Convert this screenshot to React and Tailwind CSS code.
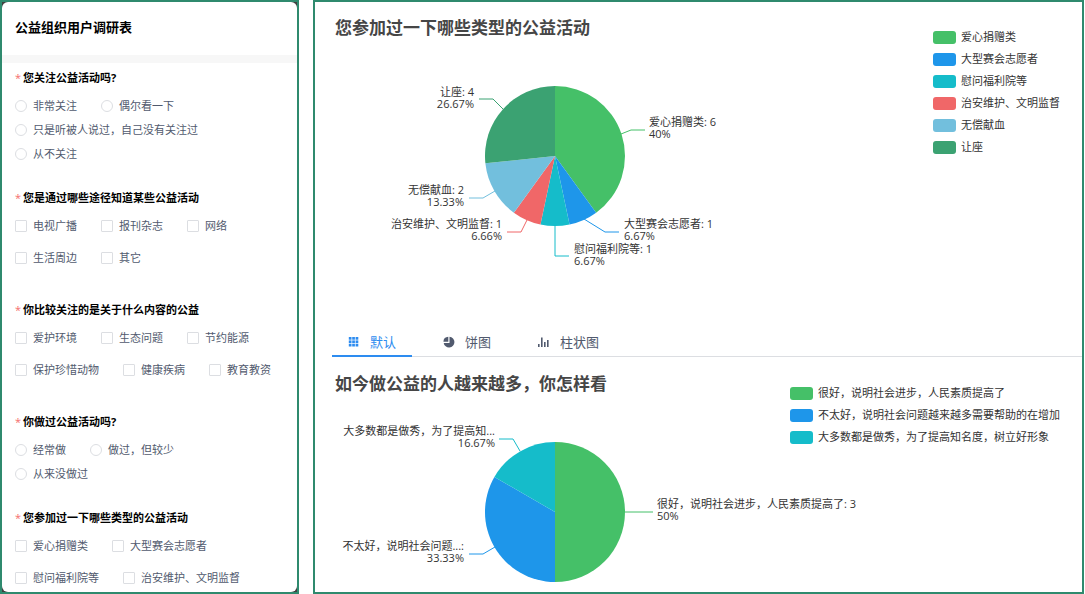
import React, { useState } from 'react'
import clsx from 'clsx'

const questions = [
    {
        id: "follow",
        title: "您关注公益活动吗?",
        type: "radio",
        options: ["非常关注", "偶尔看一下", "只是听被人说过，自己没有关注过", "从不关注"],
    },
    {
        id: "channel",
        title: "您是通过哪些途径知道某些公益活动",
        type: "checkbox",
        options: ["电视广播", "报刊杂志", "网络", "生活周边", "其它"],
    },
    {
        id: "content",
        title: "你比较关注的是关于什么内容的公益",
        type: "checkbox",
        options: ["爱护环境", "生态问题", "节约能源", "保护珍惜动物", "健康疾病", "教育教资"],
    },
    {
        id: "done",
        title: "你做过公益活动吗?",
        type: "radio",
        options: ["经常做", "做过，但较少", "从来没做过"],
    },
    {
        id: "kind",
        title: "您参加过一下哪些类型的公益活动",
        type: "checkbox",
        options: ["爱心捐赠类", "大型赛会志愿者", "慰问福利院等", "治安维护、文明监督"],
    },
]

// line and label positions are relative to the centre of the pie
const kindChart = {
    title: "您参加过一下哪些类型的公益活动",
    height: 270,
    slices: [
        { name: "爱心捐赠类", value: 6, color: "#45c068", text: "爱心捐赠类: 6", percent: "40%", line: "66,-22 76,-26 90,-26", x: 94, y: -34 },
        { name: "大型赛会志愿者", value: 1, color: "#1e96ea", text: "大型赛会志愿者: 1", percent: "6.67%", line: "29,63 50,76 64,76", x: 69, y: 68 },
        { name: "慰问福利院等", value: 1, color: "#15bcca", text: "慰问福利院等: 1", percent: "6.67%", line: "0,70 0,100 14,100", x: 19, y: 93 },
        { name: "治安维护、文明监督", value: 1, color: "#f06768", text: "治安维护、文明监督: 1", percent: "6.66%", line: "-28,64 -34,76 -48,76", x: -53, y: 68, left: true },
        { name: "无偿献血", value: 2, color: "#72bfdd", text: "无偿献血: 2", percent: "13.33%", line: "-60,35 -72,42 -86,42", x: -91, y: 34, left: true },
        { name: "让座", value: 4, color: "#3ba272", text: "让座: 4", percent: "26.67%", line: "-52,-47 -62,-57 -76,-57", x: -81, y: -64, left: true },
    ],
}

const opinionChart = {
    title: "如今做公益的人越来越多，你怎样看",
    height: 234,
    slices: [
        { name: "很好，说明社会进步，人民素质提高了", value: 3, color: "#45c068", text: "很好，说明社会进步，人民素质提高了: 3", percent: "50%", line: "70,0 84,0 98,0", x: 102, y: -8 },
        { name: "不太好，说明社会问题越来越多需要帮助的在增加", value: 2, color: "#1e96ea", text: "不太好，说明社会问题...:", percent: "33.33%", line: "-60,35 -72,42 -86,42", x: -91, y: 34, left: true },
        { name: "大多数都是做秀，为了提高知名度，树立好形象", value: 1, color: "#15bcca", text: "大多数都是做秀，为了提高知...", percent: "16.67%", line: "-35,-61 -42,-73 -56,-73", x: -60, y: -81, left: true },
    ],
}

const RADIUS = 70

const slicePath = (start, end) => {
    const point = (t) => {
        const a = t * Math.PI * 2
        return `${(Math.sin(a) * RADIUS).toFixed(2)} ${(-Math.cos(a) * RADIUS).toFixed(2)}`
    }
    return `M0 0L${point(start)}A${RADIUS} ${RADIUS} 0 ${end - start > 0.5 ? 1 : 0} 1 ${point(end)}Z`
}

const GridIcon = () => (
    <svg width="12" height="12" viewBox="0 0 12 12" fill="currentColor" aria-hidden="true">
        {[1, 4.4, 7.8].map((y) => [0.8, 4.2, 7.6].map((x) => (
            <rect key={`${x}-${y}`} x={x} y={y} width="2.7" height="2.7" />
        )))}
    </svg>
)

const PieIcon = () => (
    <svg width="12" height="12" viewBox="0 0 12 12" fill="currentColor" aria-hidden="true">
        <path d="M6.5 0.7A5.4 5.4 0 1 1 0.7 6.9H6.5Z" />
        <path d="M5.3 0.8V5.7H0.4A5.2 5.2 0 0 1 5.3 0.8Z" />
    </svg>
)

const BarIcon = () => (
    <svg width="12" height="12" viewBox="0 0 12 12" fill="currentColor" aria-hidden="true">
        <rect x="0" y="8" width="1.6" height="3" />
        <rect x="3" y="1.5" width="1.6" height="9.5" />
        <rect x="6" y="6" width="1.6" height="5" />
        <rect x="9" y="4" width="1.6" height="7" />
    </svg>
)

const tabs = [
    { id: "default", label: "默认", Icon: GridIcon },
    { id: "pie", label: "饼图", Icon: PieIcon },
    { id: "bar", label: "柱状图", Icon: BarIcon },
]

const Question = ({ question }) => {
    const isRadio = question.type === "radio"
    return (
        <fieldset className={clsx("last:mb-0", isRadio ? "mb-[22px]" : "mb-[30px]")}>
            <legend className="mb-[6px] text-[11px] leading-5 font-bold text-black">
                <span className="mr-[2px] font-normal text-[#f56c6c]">*</span>
                {question.title}
            </legend>
            <div className={clsx("flex flex-wrap", isRadio ? "pr-3" : "gap-y-2")}>
                {question.options.map((option) => (
                    <label key={option} className="mr-6 flex items-center gap-[6px] text-[11px] leading-6 text-[#515a6e]">
                        <input
                            type={question.type}
                            name={question.id}
                            value={option}
                            className={clsx(
                                "size-3 appearance-none border border-[#dcdee2] bg-white checked:border-[#2d8cf0] checked:bg-[#2d8cf0]",
                                isRadio ? "rounded-full" : "rounded-[1px]"
                            )}
                        />
                        {option}
                    </label>
                ))}
            </div>
        </fieldset>
    )
}

const PieChart = ({ chart }) => {
    const total = chart.slices.reduce((sum, s) => sum + s.value, 0)
    let start = 0
    return (
        <section className="grid">
            <svg width="480" height={chart.height} className="col-start-1 row-start-1 overflow-visible" role="img" aria-label={chart.title}>
                <g transform="translate(240 154)">
                    {chart.slices.map((s) => {
                        const from = start
                        start += s.value / total
                        return (
                            <g key={s.name}>
                                <path d={slicePath(from, start)} fill={s.color} />
                                <polyline points={s.line} fill="none" stroke={s.color} />
                                <text
                                    x={s.x}
                                    y={s.y + 4}
                                    textAnchor={s.left ? "end" : "start"}
                                    className="fill-[#333] text-[11px]"
                                >
                                    {s.text}
                                    <tspan x={s.x} dy="12">{s.percent}</tspan>
                                </text>
                            </g>
                        )
                    })}
                </g>
            </svg>
            <h2 className="col-start-1 row-start-1 self-start pt-[14px] pl-5 text-[17px] leading-6 font-bold text-[#464646]">
                {chart.title}
            </h2>
            <ul className="col-start-1 row-start-1 self-start justify-self-end pt-6 pr-[22px]">
                {chart.slices.map((s) => (
                    <li key={s.name} className="flex items-center gap-[5px] text-[11px] leading-[22px] text-[#333]">
                        <span className="h-[13px] w-[23px] rounded-[3px]" style={{ backgroundColor: s.color }}></span>
                        {s.name}
                    </li>
                ))}
            </ul>
        </section>
    )
}

const App = () => {
    const [activeTab, setActiveTab] = useState("default")

    return (
        <div className="flex min-h-screen gap-[14px] bg-white pr-px font-['Open_Sans','Noto_Sans_CJK_SC',sans-serif]">
            <aside className="flex w-[299px] shrink-0 border-2 border-[#2f8a6e] bg-[#404040]">
                <form className="flex-1 rounded-[6px] bg-white">
                    <h1 className="px-[13px] pt-[13px] pb-4 text-[13px] leading-6 font-bold text-black">公益组织用户调研表</h1>
                    <div className="h-2 bg-[#f7f7f7]"></div>
                    <div className="pt-[5px] pl-[13px]">
                        {questions.map((q) => (
                            <Question key={q.id} question={q} />
                        ))}
                    </div>
                </form>
            </aside>

            <main className="min-w-0 flex-1 border-2 border-[#2f8a6e]">
                <PieChart chart={kindChart} />
                <div role="tablist" className="mt-[53px] mb-px ml-[17px] flex gap-[15px] shadow-[inset_0_-1px_0_#dcdee2]">
                    {tabs.map(({ id, label, Icon }) => (
                        <button
                            key={id}
                            type="button"
                            role="tab"
                            aria-selected={activeTab === id}
                            onClick={() => setActiveTab(id)}
                            className={clsx(
                                "flex items-center gap-[10px] border-b-2 px-4 pt-1 text-[13px] leading-[26px]",
                                activeTab === id ? "border-[#2d8cf0] text-[#2d8cf0]" : "border-transparent text-[#515a6e]"
                            )}
                        >
                            <Icon />
                            {label}
                        </button>
                    ))}
                </div>
                <PieChart chart={opinionChart} />
            </main>
        </div>
    )
}

export default App
